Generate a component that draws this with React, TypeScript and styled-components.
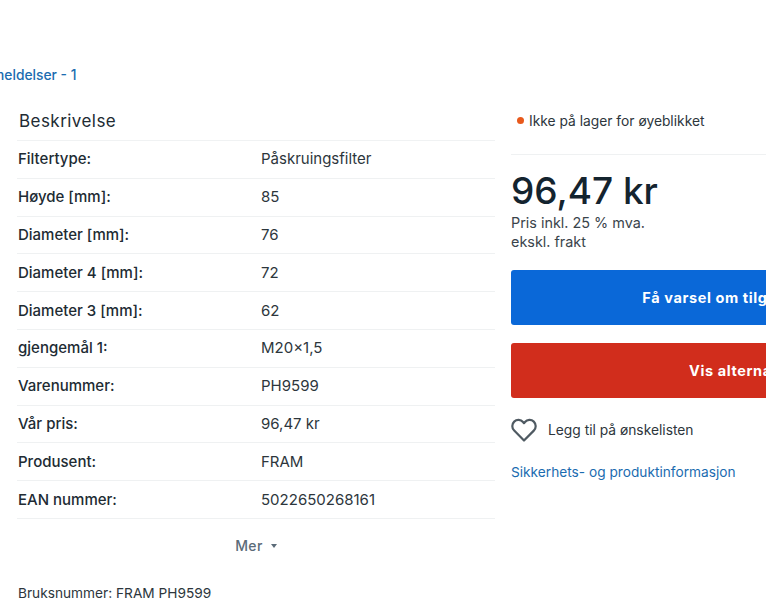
import styled, { createGlobalStyle } from "styled-components";

const GlobalStyle = createGlobalStyle`
    html, body {
        margin: 0;
        padding: 0;
        background: #fff;
        overflow: hidden;
        width: 766px;
        height: 613px;
    }
    body {
        font-family: Inter, "Liberation Sans", sans-serif;
        color: #212b33;
    }
`;

const Page = styled.div`
    width: 766px;
    height: 613px;
    overflow: hidden;
    padding-top: 66px;
    box-sizing: border-box;
`;

const ReviewLink = styled.a`
    display: block;
    margin-left: -26px;
    height: 18px;
    font-size: 13.8px;
    line-height: 18px;
    font-weight: 500;
    color: #1b6cb0;
    white-space: nowrap;
`;

const Columns = styled.div`
    display: flex;
    margin-top: 16px;
    padding-left: 17px;
`;

const Description = styled.section`
    width: 478px;
    flex: none;
`;

const Heading = styled.h2`
    margin: 0;
    height: 41px;
    padding: 8px 0 0 2px;
    box-sizing: border-box;
    font-size: 17px;
    line-height: 26px;
    font-weight: 400;
    letter-spacing: 0.45px;
    border-bottom: 1px solid #f0f2f3;
`;

const SpecRow = styled.div`
    display: grid;
    grid-template-columns: 243px 1fr;
    height: 37.8px;
    padding: 0 0 1px 1px;
    box-sizing: border-box;
    align-items: center;
    font-size: 15px;
    border-bottom: 1px solid #eff1f2;
`;

const SpecLabel = styled.span`
    font-weight: 450;
    color: #212b33;
`;

const SpecValue = styled.span`
    font-weight: 400;
    color: #2d363c;
`;

const MoreRow = styled.div`
    display: flex;
    align-items: center;
    justify-content: center;
    gap: 8px;
    height: 53px;
    font-size: 14px;
    font-weight: 500;
    letter-spacing: 0.4px;
    color: #5b6b78;
`;

const Caret = styled.span`
    width: 0;
    height: 0;
    margin-top: 1px;
    border-left: 3px solid transparent;
    border-right: 3px solid transparent;
    border-top: 4px solid #5b6b78;
`;

const UsageNote = styled.p`
    margin: 11px 0 0 1px;
    font-size: 13.7px;
    line-height: 20px;
    color: #2d363c;
`;

const BuyBox = styled.aside`
    width: 474px;
    flex: none;
    margin-left: 16px;
`;

const StockRow = styled.div`
    display: flex;
    align-items: center;
    gap: 5px;
    height: 55px;
    padding: 0 0 13px 6px;
    box-sizing: border-box;
    font-size: 13.8px;
    color: #2d363c;
    border-bottom: 1px solid #eff1f2;
`;

const StockDot = styled.span`
    width: 7px;
    height: 7px;
    border-radius: 50%;
    background: #e8591c;
`;

const Price = styled.div`
    margin-top: 13px;
    font-size: 37px;
    line-height: 45px;
    font-weight: 500;
    color: #14242f;
`;

const PriceNote = styled.div`
    font-size: 14.4px;
    line-height: 19px;
    color: #3a444b;
`;

const ActionButton = styled.button<{ $bg: string }>`
    display: block;
    width: 100%;
    height: 55px;
    padding: 0 0 1px;
    border: 0;
    border-radius: 3px;
    background: ${({ $bg }) => $bg};
    color: #fff;
    font-family: inherit;
    font-size: 14.5px;
    font-weight: 700;
    letter-spacing: 0.6px;
`;

const NotifyButton = styled(ActionButton)`
    margin-top: 19px;
`;

const AlternativesButton = styled(ActionButton)`
    margin-top: 18px;
`;

const WishRow = styled.div`
    display: flex;
    align-items: center;
    gap: 11px;
    margin-top: 18px;
    height: 28px;
    font-size: 13.8px;
    color: #2d363c;
`;

const InfoLink = styled.a`
    display: block;
    margin-top: 18px;
    font-size: 13.7px;
    line-height: 20px;
    color: #1b6cb0;
`;

const specs = [
    ["Filtertype:", "Påskruingsfilter"],
    ["Høyde [mm]:", "85"],
    ["Diameter [mm]:", "76"],
    ["Diameter 4 [mm]:", "72"],
    ["Diameter 3 [mm]:", "62"],
    ["gjengemål 1:", "M20×1,5"],
    ["Varenummer:", "PH9599"],
    ["Vår pris:", "96,47 kr"],
    ["Produsent:", "FRAM"],
    ["EAN nummer:", "5022650268161"]
];

const HeartIcon = () => (
    <svg width="26" height="24" viewBox="0 0 26 24" fill="none">
        <path
            d="M13 22.5 3.2 12.6C.6 10 .8 6 3.2 3.6c2.6-2.5 6.6-2.2 8.8.4l1 1.2 1-1.2c2.2-2.6 6.2-2.9 8.8-.4 2.4 2.4 2.6 6.4 0 9z"
            stroke="#4f5a62"
            strokeWidth="2.2"
            strokeLinejoin="round"
        />
    </svg>
);

export default function App() {
    return (
        <Page>
            <GlobalStyle />
            <ReviewLink>Anmeldelser - 1</ReviewLink>
            <Columns>
                <Description>
                    <Heading>Beskrivelse</Heading>
                    {specs.map(([label, value]) => (
                        <SpecRow key={label}>
                            <SpecLabel>{label}</SpecLabel>
                            <SpecValue>{value}</SpecValue>
                        </SpecRow>
                    ))}
                    <MoreRow>
                        Mer
                        <Caret />
                    </MoreRow>
                    <UsageNote>Bruksnummer: FRAM PH9599</UsageNote>
                </Description>
                <BuyBox>
                    <StockRow>
                        <StockDot />
                        Ikke på lager for øyeblikket
                    </StockRow>
                    <Price>96,47 kr</Price>
                    <PriceNote>Pris inkl. 25 % mva.</PriceNote>
                    <PriceNote>ekskl. frakt</PriceNote>
                    <NotifyButton $bg="#0a68d8">Få varsel om tilgjengelighet</NotifyButton>
                    <AlternativesButton $bg="#d12d1c">Vis alternativer</AlternativesButton>
                    <WishRow>
                        <HeartIcon />
                        Legg til på ønskelisten
                    </WishRow>
                    <InfoLink>Sikkerhets- og produktinformasjon</InfoLink>
                </BuyBox>
            </Columns>
        </Page>
    );
}
